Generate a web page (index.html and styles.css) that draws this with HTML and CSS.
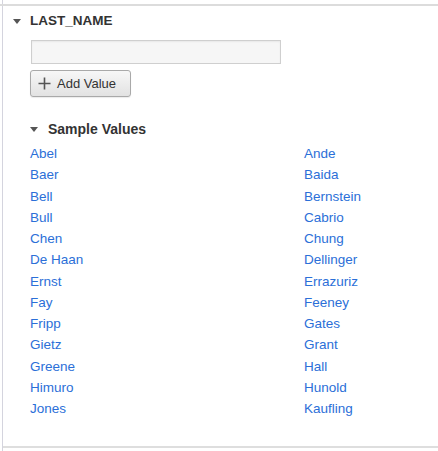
FILE: index.html
```html
<!DOCTYPE html>
<html>
<head>
<meta charset="utf-8">
<link rel="stylesheet" href="styles.css">
</head>
<body>
<div class="frame">
  <div class="topline"></div>
  <div class="panel">
    <div class="head">
      <span class="tri"></span>
      <span class="title">LAST_NAME</span>
    </div>
    <div class="body">
      <div class="input"></div>
      <button class="btn" type="button">
        <svg class="plus" width="13" height="13" viewBox="0 0 13 13"><path d="M6.5 0.5V12.5M0.5 6.5H12.5" stroke="#555" stroke-width="1.6" fill="none"/></svg>
        <span>Add Value</span>
      </button>
      <div class="subhead">
        <span class="tri"></span>
        <span class="subtitle">Sample Values</span>
      </div>
      <div class="values">
        <a>Abel</a><a>Ande</a>
        <a>Baer</a><a>Baida</a>
        <a>Bell</a><a>Bernstein</a>
        <a>Bull</a><a>Cabrio</a>
        <a>Chen</a><a>Chung</a>
        <a>De Haan</a><a>Dellinger</a>
        <a>Ernst</a><a>Errazuriz</a>
        <a>Fay</a><a>Feeney</a>
        <a>Fripp</a><a>Gates</a>
        <a>Gietz</a><a>Grant</a>
        <a>Greene</a><a>Hall</a>
        <a>Himuro</a><a>Hunold</a>
        <a>Jones</a><a>Kaufling</a>
      </div>
    </div>
  </div>
</div>
</body>
</html>
```
FILE: styles.css
```css
html, body {
  margin: 0;
  padding: 0;
  background: #fff;
}
body {
  font-family: "Liberation Sans", Arial, sans-serif;
  color: #333;
  width: 438px;
  height: 451px;
  overflow: hidden;
}
.frame {
  margin-left: 2px;
  border-left: 1px solid #d4d4de;
  height: 451px;
  padding-top: 4px;
  box-sizing: border-box;
}
.topline {
  height: 2px;
  background: #dcdcdc;
  margin-left: -3px;
}
.panel {
  height: 442px;
  padding-top: 7px;
  border-bottom: 2px solid #dedede;
  box-sizing: border-box;
}
.head {
  display: flex;
  align-items: center;
  height: 16px;
  padding-left: 10px;
}
.tri {
  width: 0;
  height: 0;
  border-left: 4px solid transparent;
  border-right: 4px solid transparent;
  border-top: 5px solid #555;
  margin-right: 9px;
}
.title, .subtitle {
  font-weight: bold;
  font-size: 14px;
  line-height: 16px;
  color: #333;
}
.title {
  font-size: 13.5px;
}
.body {
  padding-left: 27px;
}
.input {
  margin-top: 11px;
  margin-left: 1px;
  width: 250px;
  height: 24px;
  box-sizing: border-box;
  border: 1px solid #cfcfcf;
  background: #f6f6f6;
  box-shadow: inset 0 1px 2px rgba(0,0,0,0.06);
}
.btn {
  display: flex;
  align-items: center;
  gap: 6px;
  margin-top: 6px;
  width: 101px;
  height: 27px;
  box-sizing: border-box;
  padding: 0 0 0 7px;
  border: 1px solid #a9a9a9;
  border-radius: 3px;
  background: linear-gradient(#f7f7f7, #e2e2e2);
  box-shadow: 0 1px 1px rgba(0,0,0,0.08);
  font-family: "Liberation Sans", Arial, sans-serif;
  font-size: 13px;
  color: #333;
}
.plus {
  flex: none;
}
.subhead {
  display: flex;
  align-items: center;
  height: 16px;
  margin-top: 24px;
}
.subhead .tri {
  margin-right: 10px;
}
.values {
  display: grid;
  grid-template-columns: 274px 1fr;
  grid-auto-rows: 21.25px;
  margin-top: 6px;
}
.values a {
  font-size: 13.5px;
  line-height: 21.25px;
  color: #2b6fd8;
  text-decoration: none;
}
```
